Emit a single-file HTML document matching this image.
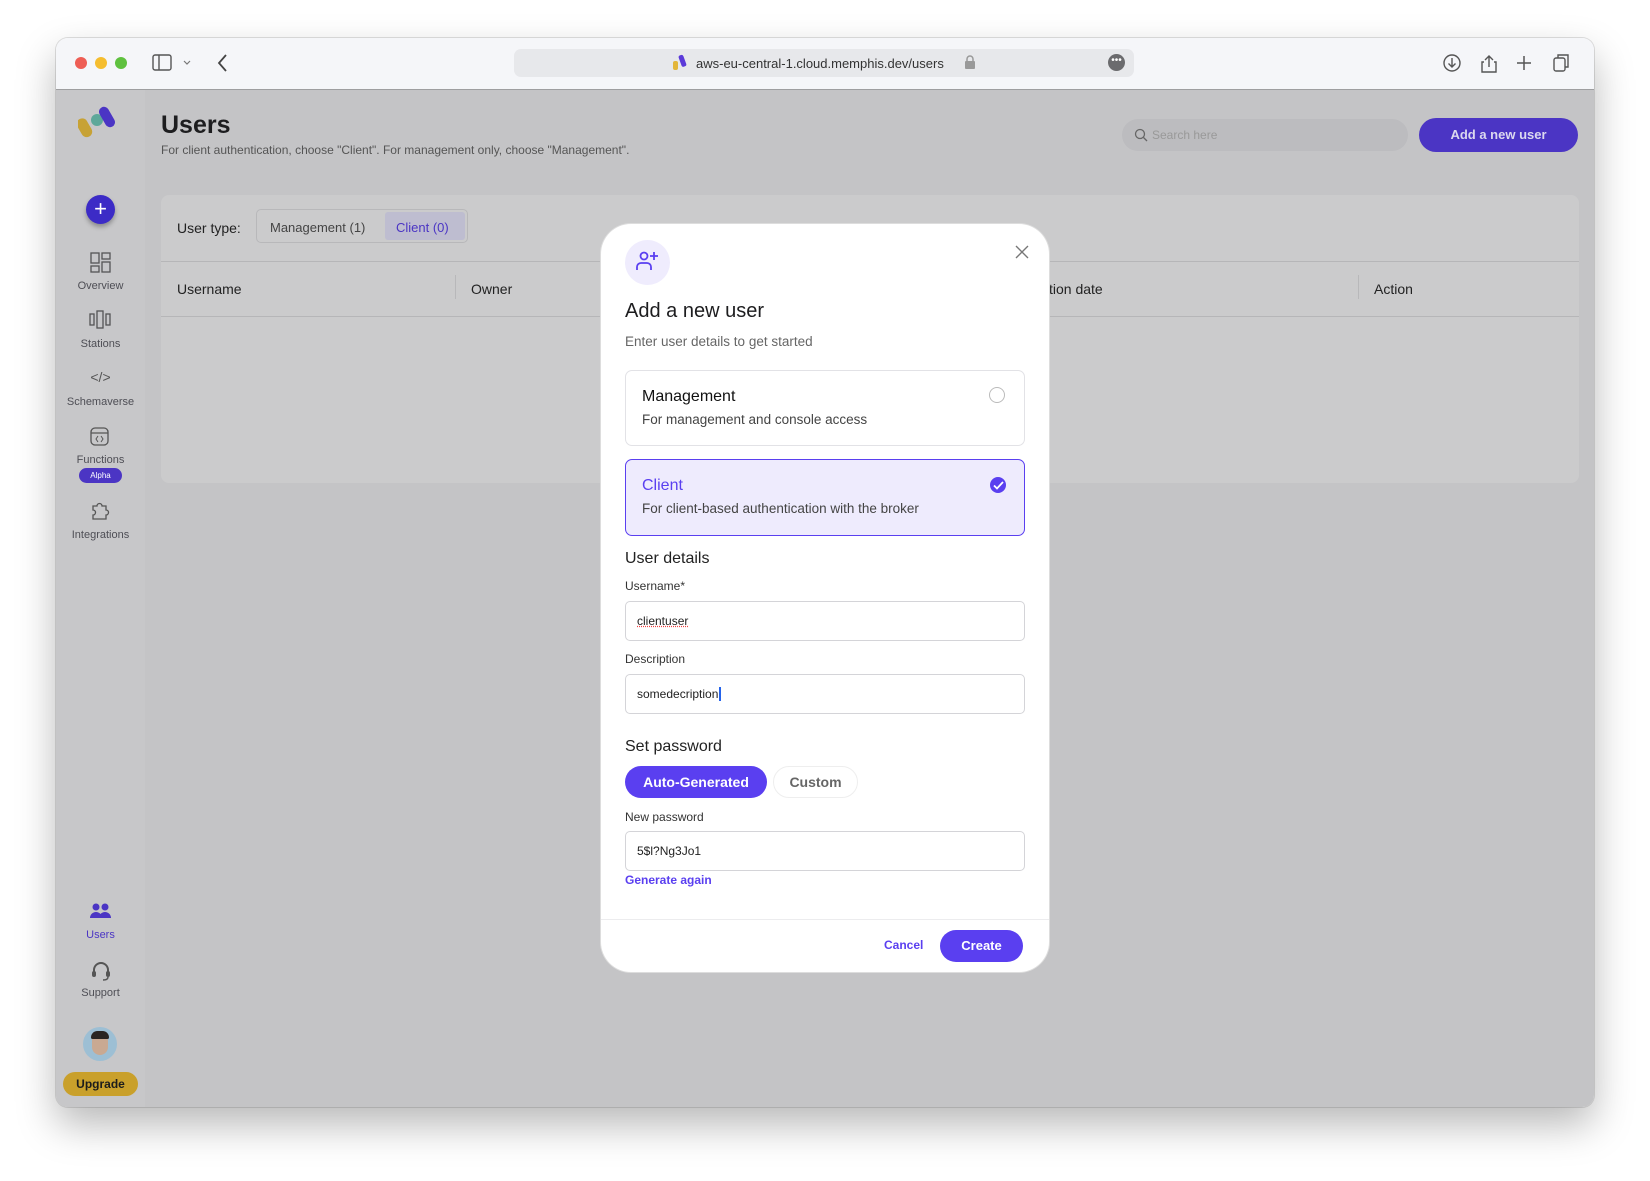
<!DOCTYPE html>
<html><head><meta charset="utf-8"><style>
*{box-sizing:border-box;margin:0;padding:0}
body{width:1650px;height:1181px;background:#fff;font-family:"Liberation Sans",sans-serif;position:relative;overflow:hidden}
.a{position:absolute}
.win{left:56px;top:38px;width:1538px;height:1069px;border-radius:12px;overflow:hidden;box-shadow:0 18px 40px rgba(0,0,0,.28),0 0 0 1px rgba(0,0,0,.12)}
.tb{left:0;top:0;width:1538px;height:52px;background:#f5f6f9;border-bottom:1px solid #9e9ea0}
.main{left:0;top:52px;width:1538px;height:1017px;background:#c4c4c6}
.side{left:0;top:0;width:89px;height:1017px;background:#c7c7c9}
.sl{width:89px;text-align:center;font-size:11px;color:#4e4e55}
.modal{left:601px;top:224px;width:448px;height:748px;background:#fff;border-radius:30px;box-shadow:0 0 0 1px #ddd}
.lbl{font-size:12px;color:#333}
.inp{left:24px;width:400px;height:40px;border:1px solid #d4d4d8;border-radius:5px;font-size:12px;color:#222;padding:12px 11px}
</style></head><body>
<div class="a win">
 <div class="a tb">
  <div class="a" style="left:19px;top:19px;width:12px;height:12px;border-radius:50%;background:#ee5e55"></div>
  <div class="a" style="left:39px;top:19px;width:12px;height:12px;border-radius:50%;background:#f5bd2f"></div>
  <div class="a" style="left:59px;top:19px;width:12px;height:12px;border-radius:50%;background:#5fc13f"></div>
  <svg class="a" style="left:96px;top:16px" width="40" height="20"><rect x="1" y="1" width="18" height="15" rx="2" fill="none" stroke="#555" stroke-width="1.4"/><line x1="7" y1="1" x2="7" y2="16" stroke="#555" stroke-width="1.4"/><path d="M32 7l3 3 3-3" fill="none" stroke="#777" stroke-width="1.2"/></svg>
  <svg class="a" style="left:160px;top:15px" width="14" height="20"><path d="M10 2L3 10l7 8" fill="none" stroke="#444" stroke-width="1.8"/></svg>
  <div class="a" style="left:458px;top:11px;width:620px;height:28px;background:#e7e8eb;border-radius:7px"></div>
  <div class="a" style="left:640px;top:18px;font-size:13px;color:#333">aws-eu-central-1.cloud.memphis.dev/users</div>
  <svg class="a" style="left:616px;top:16px" width="16" height="18"><rect x="1" y="7" width="5" height="9" rx="2" fill="#e3b63a"/><rect x="8" y="1" width="5" height="12" rx="2" fill="#5b3ad9" transform="rotate(-20 10 7)"/></svg>
  <svg class="a" style="left:908px;top:17px" width="12" height="14"><rect x="1" y="6" width="10" height="8" rx="1" fill="#999"/><path d="M3 6V4a3 3 0 016 0v2" fill="none" stroke="#999" stroke-width="1.5"/></svg>
  <div class="a" style="left:1052px;top:16px;width:17px;height:17px;border-radius:50%;background:#6b6b6e;color:#fff;font-size:10px;text-align:center;line-height:13px">•••</div>
  <svg class="a" style="left:1385px;top:14px" width="140" height="22"><circle cx="11" cy="11" r="8" fill="none" stroke="#555" stroke-width="1.4"/><path d="M11 6v9M7.5 11.5L11 15l3.5-3.5" fill="none" stroke="#555" stroke-width="1.4"/><path d="M44 8l4-4 4 4M48 4v11M43 10h-2v10h14V10h-2" fill="none" stroke="#555" stroke-width="1.4"/><path d="M83 4v14M76 11h14" stroke="#555" stroke-width="1.5"/><rect x="113" y="6" width="11" height="13" rx="2" fill="none" stroke="#555" stroke-width="1.4"/><path d="M117 6V3h10v12h-3" fill="none" stroke="#555" stroke-width="1.4"/></svg>
 </div>
 <div class="a main">
  <div class="a side">
   <svg class="a" style="left:22px;top:14px" width="44" height="36"><rect x="1" y="14" width="11" height="20" rx="5.5" fill="#c7a235" transform="rotate(-30 6 24)"/><circle cx="19" cy="16" r="6" fill="#5ea89a"/><rect x="24" y="2" width="10" height="22" rx="5" fill="#4b35c4" transform="rotate(-30 29 13)"/></svg>
   <div class="a" style="left:30px;top:105px;width:29px;height:29px;border-radius:50%;background:#3c2bc6;box-shadow:0 3px 5px rgba(0,0,0,.3);color:#fff;font-size:22px;text-align:center;line-height:27px">+</div>
   <svg class="a" style="left:34px;top:162px" width="22" height="22"><rect x="1" y="1" width="8" height="10" fill="none" stroke="#555" stroke-width="1.3"/><rect x="1" y="14" width="8" height="6" fill="none" stroke="#555" stroke-width="1.3"/><rect x="12" y="1" width="8" height="6" fill="none" stroke="#555" stroke-width="1.3"/><rect x="12" y="10" width="8" height="10" fill="none" stroke="#555" stroke-width="1.3"/></svg>
   <div class="a sl" style="top:190px">Overview</div>
   <svg class="a" style="left:33px;top:220px" width="22" height="20"><rect x="1" y="4" width="4" height="11" fill="none" stroke="#555" stroke-width="1.3"/><rect x="8" y="1" width="6" height="17" fill="none" stroke="#555" stroke-width="1.3"/><rect x="17" y="4" width="4" height="11" fill="none" stroke="#555" stroke-width="1.3"/></svg>
   <div class="a sl" style="top:248px">Stations</div>
   <div class="a sl" style="top:279px;font-size:14px;color:#555">&lt;/&gt;</div>
   <div class="a sl" style="top:306px">Schemaverse</div>
   <svg class="a" style="left:34px;top:337px" width="20" height="20"><rect x="1" y="1" width="17" height="17" rx="4" fill="none" stroke="#555" stroke-width="1.3"/><line x1="1" y1="6" x2="18" y2="6" stroke="#555" stroke-width="1.3"/><path d="M8 9l-2 3 2 3M11 9l2 3-2 3" fill="none" stroke="#555" stroke-width="1"/></svg>
   <div class="a sl" style="top:364px">Functions</div>
   <div class="a" style="left:23px;top:378px;width:43px;height:15px;border-radius:8px;background:#4b35c4;color:#fff;font-size:8px;text-align:center;line-height:15px">Alpha</div>
   <svg class="a" style="left:34px;top:410px" width="20" height="20"><path d="M3 6h4a2.5 2.5 0 015 0h4v4a2.5 2.5 0 010 5v4H3v-4a2.5 2.5 0 000-5z" fill="none" stroke="#555" stroke-width="1.3"/></svg>
   <div class="a sl" style="top:439px">Integrations</div>
   <svg class="a" style="left:34px;top:813px" width="22" height="16"><circle cx="6" cy="4" r="3.5" fill="#4b35c4"/><circle cx="15" cy="4" r="3.5" fill="#4b35c4"/><path d="M0 15a6 6 0 0112 0zM9 15a6 6 0 0112 0z" fill="#4b35c4"/></svg>
   <div class="a sl" style="top:839px;color:#4b35c4">Users</div>
   <svg class="a" style="left:34px;top:871px" width="22" height="20"><path d="M4 11V9a7 7 0 0114 0v2" fill="none" stroke="#555" stroke-width="2"/><rect x="2" y="10" width="4" height="6" rx="2" fill="#555"/><rect x="16" y="10" width="4" height="6" rx="2" fill="#555"/><path d="M18 16q0 3-5 3" fill="none" stroke="#555" stroke-width="1.5"/></svg>
   <div class="a sl" style="top:897px">Support</div>
   <div class="a" style="left:27px;top:937px;width:34px;height:34px;border-radius:50%;background:#9dbfd4;overflow:hidden"><div class="a" style="left:9px;top:6px;width:16px;height:22px;border-radius:8px;background:#c9a992"></div><div class="a" style="left:8px;top:4px;width:18px;height:8px;border-radius:8px 8px 2px 2px;background:#2a2522"></div></div>
   <div class="a" style="left:7px;top:982px;width:75px;height:24px;border-radius:12px;background:#c9a02b;font-size:12px;font-weight:bold;text-align:center;line-height:24px;color:#1c1c1c">Upgrade</div>
  </div>
  <div class="a" style="left:105px;top:21px;font-size:25px;font-weight:bold;color:#1d1d1f">Users</div>
  <div class="a" style="left:105px;top:53px;font-size:12px;color:#555">For client authentication, choose "Client". For management only, choose "Management".</div>
  <div class="a" style="left:1066px;top:29px;width:286px;height:32px;border-radius:16px;background:#bcbcbf"></div>
  <svg class="a" style="left:1078px;top:38px" width="14" height="14"><circle cx="6" cy="6" r="4.5" fill="none" stroke="#666" stroke-width="1.3"/><line x1="9.5" y1="9.5" x2="13" y2="13" stroke="#666" stroke-width="1.3"/></svg>
  <div class="a" style="left:1096px;top:38px;font-size:12px;color:#999">Search here</div>
  <div class="a" style="left:1363px;top:28px;width:159px;height:34px;border-radius:17px;background:#4b35c4;color:#dcd9ef;font-size:13px;font-weight:bold;text-align:center;line-height:34px">Add a new user</div>
  <div class="a" style="left:105px;top:105px;width:1418px;height:288px;border-radius:8px;background:#cbcbcc">
   <div class="a" style="left:16px;top:25px;font-size:14px;color:#222">User type:</div>
   <div class="a" style="left:95px;top:14px;width:212px;height:34px;border:1px solid #b8b8ba;border-radius:5px"></div>
   <div class="a" style="left:109px;top:25px;font-size:13px;color:#444">Management (1)</div>
   <div class="a" style="left:224px;top:17px;width:80px;height:28px;background:#bebdd0;border-radius:3px"></div>
   <div class="a" style="left:235px;top:25px;font-size:13px;color:#4b35c4">Client (0)</div>
   <div class="a" style="left:0;top:66px;width:1418px;height:1px;background:#b6b6b8"></div>
   <div class="a" style="left:16px;top:86px;font-size:14px;color:#222">Username</div>
   <div class="a" style="left:294px;top:80px;width:1px;height:24px;background:#b8b8ba"></div>
   <div class="a" style="left:310px;top:86px;font-size:14px;color:#222">Owner</div>
   <div class="a" style="left:1197px;top:80px;width:1px;height:24px;background:#b8b8ba"></div>
   <div class="a" style="left:1213px;top:86px;font-size:14px;color:#222">Action</div>
   <div class="a" style="left:0;top:121px;width:1418px;height:1px;background:#b6b6b8"></div>
   <div class="a" style="left:888px;top:86px;font-size:14px;color:#222">tion date</div>
  </div>
 </div>
</div>
<div class="a modal">
 <div class="a" style="left:24px;top:16px;width:45px;height:45px;border-radius:50%;background:#efecfd"></div>
 <svg class="a" style="left:34px;top:26px" width="26" height="24"><circle cx="9" cy="6" r="3.5" fill="none" stroke="#5a3ff0" stroke-width="1.8"/><path d="M2 20v-3a4 4 0 014-4h6a4 4 0 014 4v3" fill="none" stroke="#5a3ff0" stroke-width="1.8"/><path d="M19 2v8M15 6h8" stroke="#5a3ff0" stroke-width="1.8"/></svg>
 <svg class="a" style="left:414px;top:21px" width="14" height="14"><path d="M1 1l12 12M13 1L1 13" stroke="#777" stroke-width="1.4"/></svg>
 <div class="a" style="left:24px;top:76px;font-size:20px;color:#1d1d1f">Add a new user</div>
 <div class="a" style="left:24px;top:110px;font-size:13.5px;color:#666">Enter user details to get started</div>
 <div class="a" style="left:24px;top:146px;width:400px;height:76px;border:1px solid #e2e2e6;border-radius:7px">
  <div class="a" style="left:16px;top:17px;font-size:16px;color:#111">Management</div>
  <div class="a" style="left:16px;top:41px;font-size:13.5px;color:#444">For management and console access</div>
  <div class="a" style="left:363px;top:16px;width:16px;height:16px;border:1px solid #bbb;border-radius:50%"></div>
 </div>
 <div class="a" style="left:24px;top:235px;width:400px;height:77px;border:1.5px solid #5a3ff0;border-radius:7px;background:#eeebfd">
  <div class="a" style="left:16px;top:17px;font-size:16px;color:#5a3ff0">Client</div>
  <div class="a" style="left:16px;top:41px;font-size:13.5px;color:#444">For client-based authentication with the broker</div>
  <div class="a" style="left:364px;top:17px;width:16px;height:16px;border-radius:50%;background:#5a3ff0"></div>
  <svg class="a" style="left:367px;top:21px" width="11" height="9"><path d="M1 4.5l3 3L10 1" fill="none" stroke="#fff" stroke-width="1.8"/></svg>
 </div>
 <div class="a" style="left:24px;top:326px;font-size:16px;color:#222">User details</div>
 <div class="a lbl" style="left:24px;top:355px">Username*</div>
 <div class="a inp" style="top:377px"><span style="text-decoration:underline dotted #e44">clientuser</span></div>
 <div class="a lbl" style="left:24px;top:428px">Description</div>
 <div class="a inp" style="top:450px">somedecription<span style="border-left:2px solid #2463eb;margin-left:1px"></span></div>
 <div class="a" style="left:24px;top:514px;font-size:16px;color:#222">Set password</div>
 <div class="a" style="left:24px;top:542px;width:142px;height:32px;border-radius:16px;background:#5a3ff0;color:#fff;font-size:14px;font-weight:bold;text-align:center;line-height:32px">Auto-Generated</div>
 <div class="a" style="left:172px;top:542px;width:85px;height:32px;border-radius:16px;border:1px solid #eee;color:#666;font-size:14px;font-weight:bold;text-align:center;line-height:30px">Custom</div>
 <div class="a lbl" style="left:24px;top:586px">New password</div>
 <div class="a inp" style="top:607px">5$l?Ng3Jo1</div>
 <div class="a" style="left:24px;top:649px;font-size:12px;font-weight:bold;color:#5a3ff0">Generate again</div>
 <div class="a" style="left:0;top:695px;width:448px;height:1px;background:#ececee"></div>
 <div class="a" style="left:283px;top:714px;font-size:12px;font-weight:bold;color:#5a3ff0">Cancel</div>
 <div class="a" style="left:339px;top:706px;width:83px;height:32px;border-radius:16px;background:#5a3ff0;color:#fff;font-size:13px;font-weight:bold;text-align:center;line-height:32px">Create</div>
</div>
</body></html>
